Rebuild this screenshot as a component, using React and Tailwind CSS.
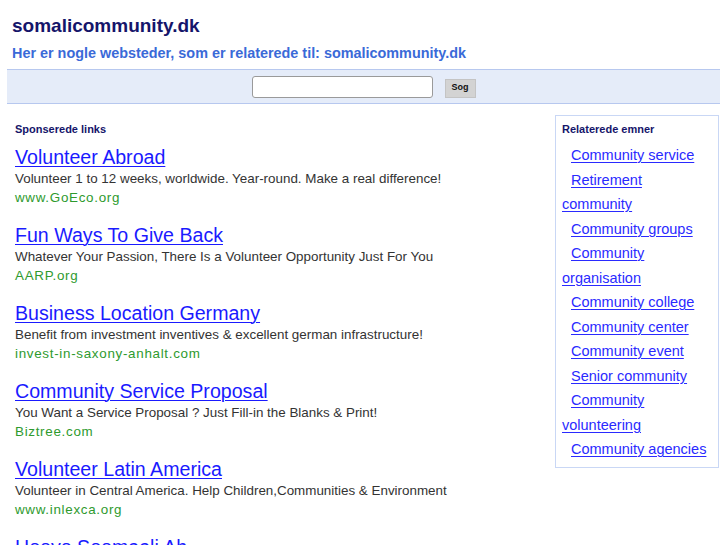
import React from 'react';

const ads = [
  { title: 'Volunteer Abroad', desc: 'Volunteer 1 to 12 weeks, worldwide. Year-round. Make a real difference!', url: 'www.GoEco.org' },
  { title: 'Fun Ways To Give Back', desc: 'Whatever Your Passion, There Is a Volunteer Opportunity Just For You', url: 'AARP.org' },
  { title: 'Business Location Germany', desc: 'Benefit from investment inventives & excellent german infrastructure!', url: 'invest-in-saxony-anhalt.com' },
  { title: 'Community Service Proposal', desc: 'You Want a Service Proposal ? Just Fill-in the Blanks & Print!', url: 'Biztree.com' },
  { title: 'Volunteer Latin America', desc: 'Volunteer in Central America. Help Children,Communities & Environment', url: 'www.inlexca.org' },
  { title: 'Hooyo Soomaali Ah', desc: 'Somali community news, events and support in Denmark', url: 'www.somali.dk' },
];

const topics = [
  'Community service',
  'Retirement community',
  'Community groups',
  'Community organisation',
  'Community college',
  'Community center',
  'Community event',
  'Senior community',
  'Community volunteering',
  'Community agencies',
];

export default function App() {
  return (
    <div className="h-[545px] overflow-hidden bg-white font-['Liberation_Sans',Arial,sans-serif]">
      <div className="px-[12px] pt-[15px]">
        <h1 className="text-[19px] leading-[22px] font-bold text-[#15156a]">somalicommunity.dk</h1>
        <h2 className="mt-[7px] text-[14.4px] leading-[18px] font-bold text-[#3a6ad8]">
          Her er nogle websteder, som er relaterede til: somalicommunity.dk
        </h2>
      </div>

      <div className="mx-[7px] mt-[7px] h-[35px] bg-[#e5ecf9] border-y border-[#b7c8ef] flex items-center justify-center gap-[12px]">
        <input className="w-[181px] h-[22px] bg-white border border-[#9a9a9a] rounded-[3px] px-1 text-[13px] outline-none" />
        <button className="w-[31px] h-[19px] mt-[3px] bg-[#d3d3d3] border border-[#c4c4c4] text-[9px] font-bold text-[#111]">Sog</button>
      </div>

      <div className="flex items-start mt-[11px]">
        <div className="flex-1 pl-[15px] pt-[7px]">
          <div className="text-[11px] leading-[14px] font-bold text-[#15156a]">Sponserede links</div>
          <div className="mt-[9px] flex flex-col gap-[16px]">
            {ads.map((ad) => (
              <div key={ad.title}>
                <a href="#" className="block w-fit text-[19.6px] leading-[24px] text-[#1a1aff] underline decoration-1 underline-offset-2">{ad.title}</a>
                <div className="text-[13.4px] leading-[19px] text-[#333]">{ad.desc}</div>
                <div className="text-[13.4px] leading-[19px] tracking-[0.7px] text-[#2e9a2e]">{ad.url}</div>
              </div>
            ))}
          </div>
        </div>

        <div className="w-[164px] mr-[8px] border border-[#c9d7f5] pl-[6px] pr-[6px] pt-[6px] pb-[5px]">
          <div className="text-[11px] leading-[14px] font-bold text-[#15156a]">Relaterede emner</div>
          <ul className="mt-[7px]">
            {topics.map((t) => (
              <li key={t} className="indent-[9px] text-[14.5px] leading-[24.5px]">
                <a href="#" className="text-[#2a2aff] underline decoration-1 underline-offset-2">{t}</a>
              </li>
            ))}
          </ul>
        </div>
      </div>
    </div>
  );
}
